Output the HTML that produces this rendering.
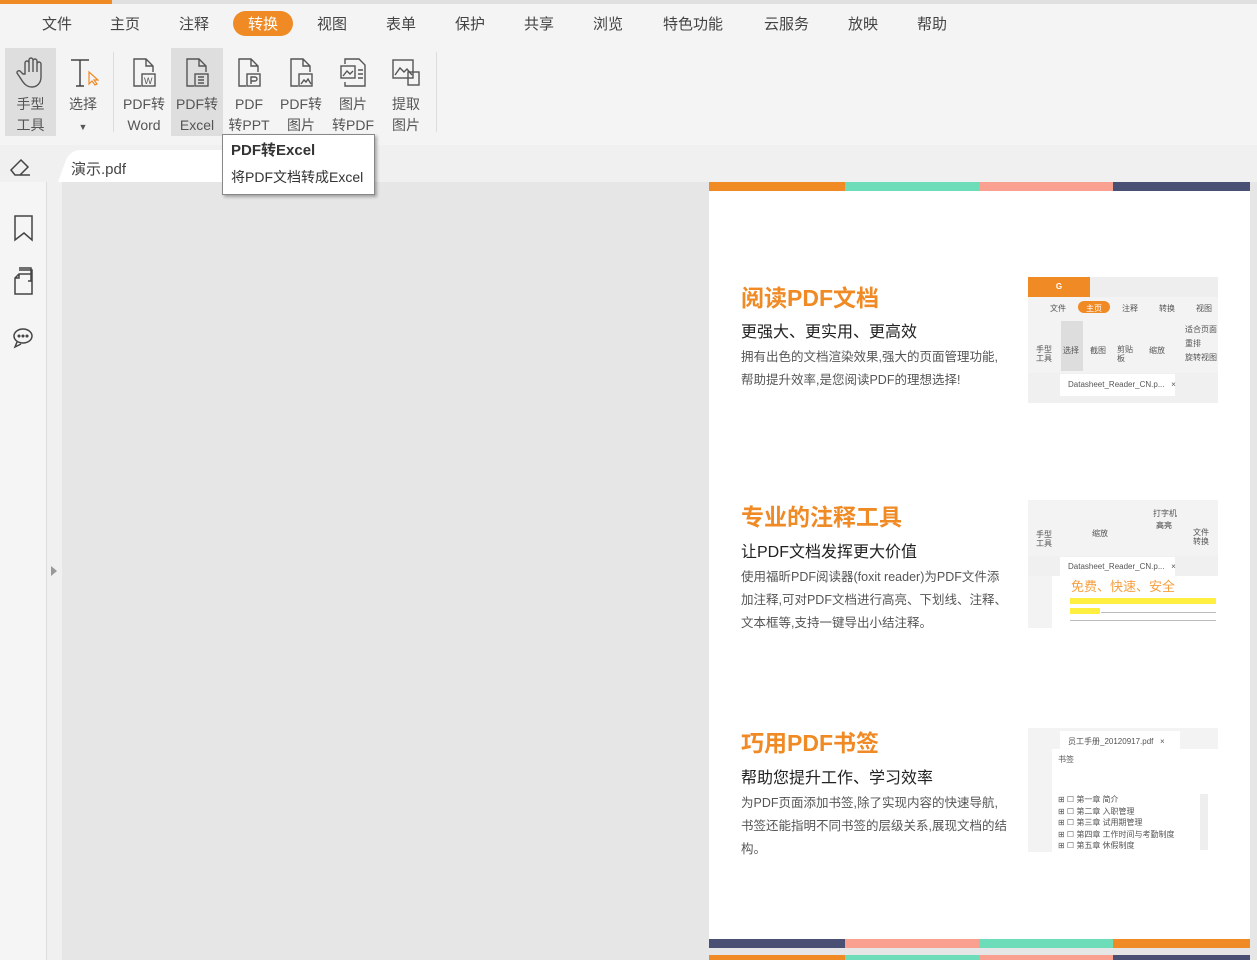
<!DOCTYPE html>
<html><head><meta charset="utf-8"><style>
*{margin:0;padding:0;box-sizing:border-box}
body{width:1257px;height:960px;overflow:hidden;background:#e6e6e6;font-family:"Liberation Sans","Noto Sans CJK SC",sans-serif;position:relative;color:#333}
.a{position:absolute}
.menu span{position:absolute;top:13px;font-size:15px;color:#444}
.tb{position:absolute;top:48px;height:88px;text-align:center;font-size:14px;color:#555;line-height:21px}
.tb svg{display:block;margin:8px auto 4px}
.h{position:absolute;left:741px;font-size:23px;font-weight:bold;color:#f08a24}
.s{position:absolute;left:741px;font-size:16px;color:#222}
.p{position:absolute;left:741px;font-size:12.5px;color:#555;line-height:23px;width:268px}
.th{position:absolute;left:1028px;width:190px;background:#fff;font-size:8px;color:#555;overflow:hidden}
</style></head><body>
<div class="a" style="left:0;top:0;width:1257px;height:145px;background:#f4f4f4"></div>
<div class="a" style="left:0;top:0;width:1257px;height:4px;background:#e0e0e0"></div>
<div class="a" style="left:0;top:0;width:112px;height:4px;background:#f08a24"></div>
<div class="menu">
<span style="left:42px">文件</span><span style="left:110px">主页</span><span style="left:179px">注释</span>
<div class="a" style="left:233px;top:11px;width:60px;height:25px;border-radius:13px;background:#f08a24"></div>
<span style="left:248px;color:#fff">转换</span><span style="left:317px">视图</span><span style="left:386px">表单</span><span style="left:455px">保护</span><span style="left:524px">共享</span><span style="left:593px">浏览</span><span style="left:663px">特色功能</span><span style="left:764px">云服务</span><span style="left:848px">放映</span><span style="left:917px">帮助</span>
</div>
<div class="a" style="left:5px;top:48px;width:51px;height:88px;background:#dedede"></div>
<div class="a" style="left:171px;top:48px;width:52px;height:88px;background:#dedede"></div>
<div class="a" style="left:113px;top:52px;width:1px;height:80px;background:#ddd"></div>
<div class="a" style="left:436px;top:52px;width:1px;height:80px;background:#ddd"></div>
<div class="tb" style="left:5px;width:51px"><svg width="30" height="34" viewBox="0 0 30 34" fill="none" stroke="#555" stroke-width="1.4"><path d="M9 18V7a2 2 0 014 0v9V4a2 2 0 014 0v12V5a2 2 0 014 0v11V8a2 2 0 014 0v13c0 6-4 10-9 10s-8-3-11-8l-4-6a2 2 0 013-2l3 3z"/></svg>手型<br>工具</div>
<div class="tb" style="left:58px;width:50px"><svg width="32" height="34" viewBox="0 0 32 34" fill="none" stroke="#444" stroke-width="1.5"><path d="M4 4h18M13 4v26M9 30h8"/><path d="M22 16v12l3-3 3 4 2-1-3-4h4z" stroke="#f08a24" stroke-width="1.2"/></svg>选择<br><span style="font-size:9px">▼</span></div>
<div class="tb" style="left:119px;width:50px"><svg width="30" height="34" viewBox="0 0 30 34" fill="none" stroke="#555" stroke-width="1.4"><path d="M12 30H5V3h12l7 7v6M17 3v7h7"/><rect x="13" y="18" width="13" height="12"/><text x="15" y="28" font-size="9" fill="#555" stroke="none" font-family="Liberation Sans">W</text></svg>PDF转<br>Word</div>
<div class="tb" style="left:171px;width:52px"><svg width="30" height="34" viewBox="0 0 30 34" fill="none" stroke="#555" stroke-width="1.4"><path d="M12 30H5V3h12l7 7v6M17 3v7h7"/><rect x="13" y="18" width="13" height="12"/><path d="M16 21h6M16 24h6M16 27h6"/></svg>PDF转<br>Excel</div>
<div class="tb" style="left:224px;width:50px"><svg width="30" height="34" viewBox="0 0 30 34" fill="none" stroke="#555" stroke-width="1.4"><path d="M12 30H5V3h12l7 7v6M17 3v7h7"/><rect x="13" y="18" width="13" height="12"/><path d="M17 28v-7h4a2 2 0 010 4h-4"/></svg>PDF<br>转PPT</div>
<div class="tb" style="left:276px;width:50px"><svg width="30" height="34" viewBox="0 0 30 34" fill="none" stroke="#555" stroke-width="1.4"><path d="M12 30H5V3h12l7 7v6M17 3v7h7"/><rect x="13" y="18" width="13" height="12"/><path d="M15 28l3-4 2 2 2-3 3 5"/></svg>PDF转<br>图片</div>
<div class="tb" style="left:328px;width:50px"><svg width="30" height="34" viewBox="0 0 30 34" fill="none" stroke="#555" stroke-width="1.4"><path d="M7 8V3h14l6 6v21H7v-4"/><rect x="3" y="10" width="14" height="12"/><path d="M5 20l4-5 3 3 3-3M20 14h5M20 18h5M20 22h5"/></svg>图片<br>转PDF</div>
<div class="tb" style="left:381px;width:50px"><svg width="32" height="34" viewBox="0 0 32 34" fill="none" stroke="#555" stroke-width="1.4"><rect x="3" y="4" width="20" height="18"/><path d="M5 19l5-7 4 4 3-3 5 6"/><rect x="18" y="16" width="11" height="13"/></svg>提取<br>图片</div>
<div class="a" style="left:0;top:145px;width:1257px;height:37px;background:#f0f0f0"></div>
<svg class="a" style="left:8px;top:156px" width="24" height="22" viewBox="0 0 24 22" fill="none" stroke="#444" stroke-width="1.5"><path d="M3 14L13 4l7 7-8 8H7zM7 19h15"/></svg>
<div class="a" style="left:58px;top:150px;width:170px;height:32px;background:#fff;border-top-left-radius:10px;transform:skewX(-20deg);transform-origin:bottom"></div>
<div class="a" style="left:71px;top:158px;font-size:15px;color:#444">演示.pdf</div>
<div class="a" style="left:0;top:182px;width:46px;height:778px;background:#f5f5f5"></div>
<div class="a" style="left:46px;top:182px;width:16px;height:778px;background:#f0f0f0;border-left:1px solid #ddd"></div>
<div class="a" style="left:51px;top:566px;width:0;height:0;border-left:6px solid #999;border-top:5px solid transparent;border-bottom:5px solid transparent"></div>
<svg class="a" style="left:12px;top:214px" width="24" height="140" viewBox="0 0 24 140" fill="none" stroke="#444" stroke-width="1.5"><path d="M3 2h17v24l-8-7-9 7z"/><path d="M7 60h13v20H3V64zM7 56h13v4M3 64h4v-4"/><path d="M4 58h12v13h-3" transform="translate(3,-4)"/><ellipse cx="11" cy="122" rx="9" ry="7"/><path d="M5 128l-2 5 6-3"/><circle cx="7" cy="122" r=".8"/><circle cx="11" cy="122" r=".8"/><circle cx="15" cy="122" r=".8"/></svg>
<div class="a" style="left:709px;top:182px;width:541px;height:766px;background:#fff"></div>
<div class="a" style="left:709px;top:182px;width:136px;height:9px;background:#f08a24"></div>
<div class="a" style="left:845px;top:182px;width:134px;height:9px;background:#6ddcb8"></div>
<div class="a" style="left:979px;top:182px;width:134px;height:9px;background:#f9a090"></div>
<div class="a" style="left:1113px;top:182px;width:137px;height:9px;background:#4a5073"></div>
<div class="a" style="left:709px;top:939px;width:136px;height:9px;background:#4a5073"></div>
<div class="a" style="left:845px;top:939px;width:134px;height:9px;background:#f9a090"></div>
<div class="a" style="left:979px;top:939px;width:134px;height:9px;background:#6ddcb8"></div>
<div class="a" style="left:1113px;top:939px;width:137px;height:9px;background:#f08a24"></div>
<div class="a" style="left:709px;top:955px;width:136px;height:5px;background:#f08a24"></div>
<div class="a" style="left:845px;top:955px;width:134px;height:5px;background:#6ddcb8"></div>
<div class="a" style="left:979px;top:955px;width:134px;height:5px;background:#f9a090"></div>
<div class="a" style="left:1113px;top:955px;width:137px;height:5px;background:#4a5073"></div>
<div class="h" style="top:279px">阅读PDF文档</div>
<div class="s" style="top:318px">更强大、更实用、更高效</div>
<div class="p" style="top:346px">拥有出色的文档渲染效果,强大的页面管理功能,帮助提升效率,是您阅读PDF的理想选择!</div>
<div class="h" style="top:498px">专业的注释工具</div>
<div class="s" style="top:538px">让PDF文档发挥更大价值</div>
<div class="p" style="top:566px">使用福昕PDF阅读器(foxit reader)为PDF文件添加注释,可对PDF文档进行高亮、下划线、注释、文本框等,支持一键导出小结注释。</div>
<div class="h" style="top:724px">巧用PDF书签</div>
<div class="s" style="top:764px">帮助您提升工作、学习效率</div>
<div class="p" style="top:792px">为PDF页面添加书签,除了实现内容的快速导航,书签还能指明不同书签的层级关系,展现文档的结构。</div>
<div class="th" style="top:277px;height:126px;background:#f3f3f3">
<div class="a" style="left:0;top:0;width:62px;height:20px;background:#f08a24;color:#fff;font-weight:bold;text-align:center;line-height:20px">G</div>
<div class="a" style="left:0;top:0;left:62px;width:128px;height:20px;background:#eee"></div>
<div class="a" style="left:50px;top:24px;width:32px;height:12px;border-radius:6px;background:#f08a24"></div>
<div class="a" style="top:26px;left:22px">文件</div><div class="a" style="top:26px;left:58px;color:#fff">主页</div><div class="a" style="top:26px;left:94px">注释</div><div class="a" style="top:26px;left:131px">转换</div><div class="a" style="top:26px;left:168px">视图</div>
<div class="a" style="left:33px;top:44px;width:22px;height:50px;background:#ddd"></div>
<div class="a" style="top:68px;left:8px;line-height:9px">手型<br>工具</div><div class="a" style="top:68px;left:35px">选择</div><div class="a" style="top:68px;left:62px">截图</div><div class="a" style="top:68px;left:89px;line-height:9px">剪贴<br>板</div><div class="a" style="top:68px;left:121px">缩放</div>
<div class="a" style="top:46px;left:157px;line-height:14px">适合页面<br>重排<br>旋转视图</div>
<div class="a" style="left:0;top:96px;width:190px;height:30px;background:#f0f0f0"></div>
<div class="a" style="left:32px;top:97px;width:115px;height:22px;background:#fff"></div>
<div class="a" style="top:103px;left:40px">Datasheet_Reader_CN.p...&nbsp;&nbsp;&nbsp;×</div>
</div>
<div class="th" style="top:500px;height:128px;background:#f3f3f3">
<div class="a" style="top:30px;left:8px;line-height:9px">手型<br>工具</div><div class="a" style="top:28px;left:64px">缩放</div><div class="a" style="top:8px;left:125px">打字机</div><div class="a" style="top:20px;left:128px;color:#333">高亮</div><div class="a" style="top:28px;left:165px;line-height:9px">文件<br>转换</div>
<div class="a" style="left:0;top:56px;width:190px;height:20px;background:#f0f0f0"></div>
<div class="a" style="left:32px;top:57px;width:115px;height:19px;background:#fff"></div>
<div class="a" style="top:62px;left:40px">Datasheet_Reader_CN.p...&nbsp;&nbsp;&nbsp;×</div>
<div class="a" style="left:24px;top:76px;width:166px;height:52px;background:#fff"></div>
<div class="a" style="top:76px;left:43px;font-size:13px;color:#f5a040">免费、快速、安全</div>
<div class="a" style="top:98px;left:42px;width:146px;height:6px;background:#ffef40"></div>
<div class="a" style="top:108px;left:42px;width:30px;height:6px;background:#ffef40"></div>
<div class="a" style="top:108px;left:73px;width:115px;height:1px;top:112px;background:#bbb"></div>
<div class="a" style="top:120px;left:42px;width:146px;height:1px;background:#bbb"></div>
</div>
<div class="th" style="top:728px;height:124px;background:#f3f3f3">
<div class="a" style="left:32px;top:3px;width:120px;height:18px;background:#fff"></div>
<div class="a" style="top:8px;left:40px">员工手册_20120917.pdf&nbsp;&nbsp;&nbsp;×</div>
<div class="a" style="left:24px;top:21px;width:166px;height:103px;background:#fff"></div>
<div class="a" style="top:26px;left:30px">书签</div>
<div class="a" style="top:66px;left:30px;line-height:11.5px">⊞ ☐ 第一章 简介<br>⊞ ☐ 第二章 入职管理<br>⊞ ☐ 第三章 试用期管理<br>⊞ ☐ 第四章 工作时间与考勤制度<br>⊞ ☐ 第五章 休假制度</div>
<div class="a" style="left:172px;top:66px;width:8px;height:56px;background:#eee"></div>
</div>
<div class="a" style="left:222px;top:134px;width:153px;height:61px;background:#fff;border:1px solid #888;box-shadow:2px 2px 3px rgba(0,0,0,.3)"></div>
<div class="a" style="left:231px;top:139px;font-size:15px;font-weight:bold;color:#333">PDF转Excel</div>
<div class="a" style="left:231px;top:167px;font-size:14px;color:#333">将PDF文档转成Excel</div>
</body></html>
